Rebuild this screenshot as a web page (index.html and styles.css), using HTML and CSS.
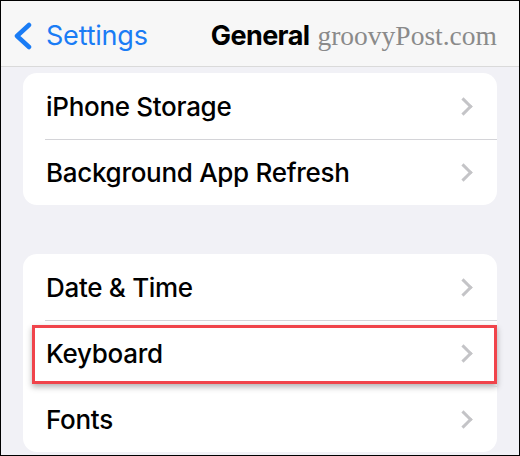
FILE: index.html
```html
<!DOCTYPE html>
<html>

<head>
    <title>General</title>
    <meta charset="utf-8">
    <link rel="stylesheet" href="styles.css">
</head>

<body>
    <div class="ios-screen">
        <div class="ios-nav">
            <a class="ios-back">
                <svg width="22" height="28" viewBox="0 0 22 28">
                    <path d="M17 3 L5 14 L17 25" fill="none" stroke="#1a7cf5" stroke-width="4.5" stroke-linecap="round" stroke-linejoin="round" />
                </svg>
                <span>Settings</span>
            </a>
            <h1>General</h1>
            <span class="ios-mark">groovyPost.com</span>
        </div>

        <ul class="ios-group">
            <li>iPhone Storage<i class="ios-chevron"></i></li>
            <li>Background App Refresh<i class="ios-chevron"></i></li>
        </ul>

        <ul class="ios-group">
            <li>Date &amp; Time<i class="ios-chevron"></i></li>
            <li class="is-marked">Keyboard<i class="ios-chevron"></i></li>
            <li>Fonts<i class="ios-chevron"></i></li>
        </ul>
    </div>
</body>

</html>
```

FILE: styles.css
```css
body {
    margin: 0;
    overflow: hidden;
}

.ios-screen {
    width: 520px;
    height: 456px;
    box-sizing: border-box;
    border: 1px solid #000;
    background-color: #f1f1f6;
    overflow: hidden;
    font-family: Inter, "Liberation Sans", sans-serif;
}

.ios-nav {
    height: 66px;
    display: flex;
    align-items: center;
    padding: 4px 0 0 11px;
    box-sizing: border-box;
    background-color: #f7f7f7;
    border-bottom: 1px solid #dadada;
}

.ios-back {
    display: flex;
    align-items: center;
    gap: 12px;
    color: #1a7cf5;
    font-size: 27px;
    letter-spacing: -0.2px;
}

.ios-back svg {
    display: block;
}

.ios-nav h1 {
    margin: 0 0 0 63px;
    font-size: 27px;
    font-weight: 700;
    letter-spacing: -0.6px;
    color: #000;
}

.ios-mark {
    margin-left: 8px;
    font-family: "Liberation Serif", serif;
    font-size: 27.5px;
    color: #8a8a8a;
}

.ios-group {
    list-style: none;
    margin: 6px 22px 49px 22px;
    padding: 0;
    background-color: #fff;
    border-radius: 14px;
}

.ios-group li {
    position: relative;
    height: 66px;
    display: flex;
    align-items: center;
    justify-content: space-between;
    padding: 0 25px 0 23px;
    font-size: 26px;
    font-weight: 500;
    letter-spacing: -0.3px;
    color: #000;
}

.ios-group li + li::before {
    content: "";
    position: absolute;
    top: 0;
    left: 22px;
    right: 0;
    border-top: 1px solid #d4d4d8;
}

.ios-chevron {
    width: 10px;
    height: 10px;
    border-top: 3px solid #c4c4c7;
    border-right: 3px solid #c4c4c7;
    transform: rotate(45deg);
    margin-right: 2px;
}

.ios-group li.is-marked::after {
    content: "";
    position: absolute;
    left: 9px;
    top: 5px;
    width: 465px;
    height: 59px;
    box-sizing: border-box;
    border: 3px solid #f0444b;
    box-shadow: 0 3px 6px rgba(0, 0, 0, .3);
}
```
